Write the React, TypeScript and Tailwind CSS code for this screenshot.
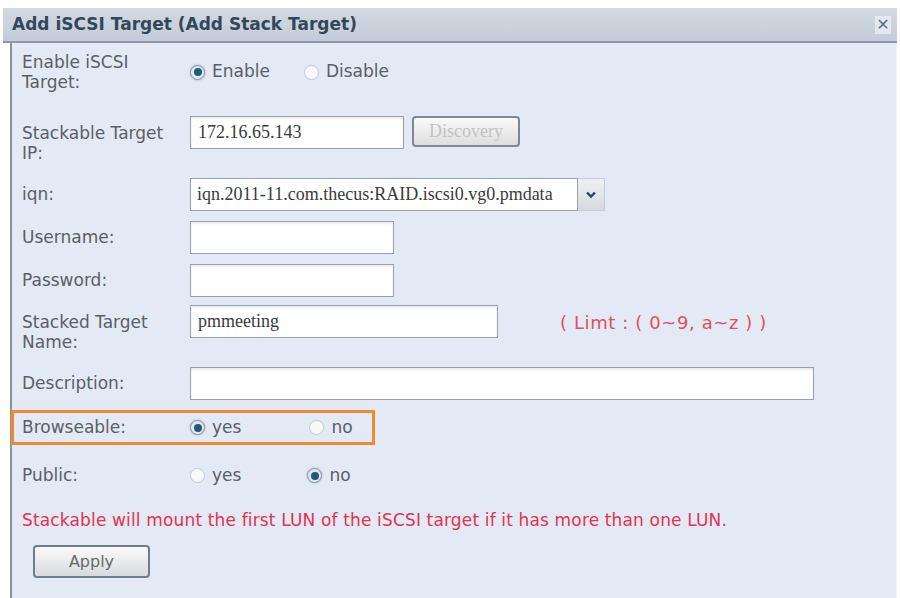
import React, { useState } from 'react';

const sans = { fontFamily: '"DejaVu Sans", Verdana, sans-serif' };
const serif = { fontFamily: '"Liberation Serif", "Times New Roman", serif' };

function Radio({ checked, label, onClick }: { checked: boolean; label: string; onClick: () => void }) {
  return (
    <button type="button" onClick={onClick} className="flex items-center gap-[7px] text-[17px] text-[#5a5f66]">
      <span
        className={`flex h-[15px] w-[15px] items-center justify-center rounded-full border ${
          checked
            ? 'border-[#8a97a6] bg-[#dfe7ef] shadow-[0_0_2px_rgba(60,110,140,0.5)]'
            : 'border-[#c2c8d0] bg-[#f8f9fb]'
        }`}
      >
        {checked && <span className="h-[8px] w-[8px] rounded-full bg-[#235a74]" />}
      </span>
      <span>{label}</span>
    </button>
  );
}

function TextInput({ value, width, onChange }: { value: string; width: string; onChange: (v: string) => void }) {
  return (
    <input
      type="text"
      value={value}
      onChange={(e) => onChange(e.target.value)}
      style={serif}
      className={`${width} h-[33px] border border-[#97a1ae] bg-white px-[7px] text-[18px] text-[#3a3a3a] shadow-[inset_0_2px_2px_rgba(0,0,0,0.08)] outline-none`}
    />
  );
}

export default function App() {
  const [enabled, setEnabled] = useState(true);
  const [ip, setIp] = useState('172.16.65.143');
  const [username, setUsername] = useState('');
  const [password, setPassword] = useState('');
  const [targetName, setTargetName] = useState('pmmeeting');
  const [description, setDescription] = useState('');
  const [browseable, setBrowseable] = useState(true);
  const [isPublic, setIsPublic] = useState(false);

  return (
    <div className="h-[598px] w-[900px] overflow-hidden bg-white pt-[8px]" style={sans}>
      {/* Title bar */}
      <div className="mx-[3px] flex h-[35px] items-center justify-between border-b-2 border-[#8d99a8] bg-gradient-to-b from-[#d3d9e1] to-[#c3ccd9] pl-[9px] pr-[6px]">
        <h1 className="text-[17px] font-bold text-[#33475a]">Add iSCSI Target (Add Stack Target)</h1>
        <span className="flex h-[18px] w-[16px] items-center justify-center bg-[#e4e9f1] text-[16px] font-bold leading-none text-[#5b6d86]">
          ✕
        </span>
      </div>

      {/* Body */}
      <div className="ml-[10px] mr-[3px] h-[560px] border-l-2 border-r border-l-[#8793a4] border-r-[#eef1f7] bg-[#e3e9f5] pl-[10px] text-[17px] text-[#5a5f66]">
        {/* Enable */}
        <div className="flex items-center pt-[9px]">
          <div className="w-[168px] leading-[20px]">
            Enable iSCSI
            <br />
            Target:
          </div>
          <div className="flex gap-[34px]">
            <Radio checked={enabled} label="Enable" onClick={() => setEnabled(true)} />
            <Radio checked={!enabled} label="Disable" onClick={() => setEnabled(false)} />
          </div>
        </div>

        {/* Stackable Target IP */}
        <div className="mt-[24px] flex items-start">
          <div className="w-[168px] pt-[7px] leading-[20px]">
            Stackable Target
            <br />
            IP:
          </div>
          <TextInput value={ip} width="w-[214px]" onChange={setIp} />
          <button
            type="button"
            disabled
            style={serif}
            className="ml-[8px] h-[31px] w-[108px] rounded-[4px] border-2 border-[#7d8897] bg-gradient-to-b from-[#fafafa] to-[#dedede] text-[18px] text-[#c2c2c2]"
          >
            Discovery
          </button>
        </div>

        {/* iqn */}
        <div className="mt-[15px] flex items-center">
          <div className="w-[168px]">iqn:</div>
          <div className="flex h-[33px]">
            <div
              style={serif}
              className="flex w-[388px] items-center overflow-hidden whitespace-nowrap border border-[#97a1ae] bg-white px-[6px] text-[18px] text-[#3a3a3a]"
            >
              iqn.2011-11.com.thecus:RAID.iscsi0.vg0.pmdata
            </div>
            <div className="flex w-[27px] items-center justify-center border border-l-0 border-[#c6ccd6] bg-gradient-to-b from-[#eef0f3] to-[#d6dae0]">
              <svg width="12" height="8" viewBox="0 0 12 8">
                <path d="M2 1.5 L6 5.5 L10 1.5" fill="none" stroke="#2c3f7a" strokeWidth="2.4" />
              </svg>
            </div>
          </div>
        </div>

        {/* Username */}
        <div className="mt-[10px] flex items-center">
          <div className="w-[168px]">Username:</div>
          <TextInput value={username} width="w-[204px]" onChange={setUsername} />
        </div>

        {/* Password */}
        <div className="mt-[10px] flex items-center">
          <div className="w-[168px]">Password:</div>
          <TextInput value={password} width="w-[204px]" onChange={setPassword} />
        </div>

        {/* Stacked Target Name */}
        <div className="mt-[8px] flex items-start">
          <div className="w-[168px] pt-[7px] leading-[20px]">
            Stacked Target
            <br />
            Name:
          </div>
          <TextInput value={targetName} width="w-[308px]" onChange={setTargetName} />
          <span className="ml-[62px] pt-[4px] text-[18px] tracking-[0.6px] text-[#e0505c]">
            ( Limt : ( 0~9, a~z ) )
          </span>
        </div>

        {/* Description */}
        <div className="mt-[15px] flex items-center">
          <div className="w-[168px]">Description:</div>
          <TextInput value={description} width="w-[624px]" onChange={setDescription} />
        </div>

        {/* Browseable */}
        <div className="-ml-[11px] mt-[10px] flex h-[35px] w-[364px] items-center border-[3px] border-[#f08a2c] pl-[8px]">
          <div className="w-[168px]">Browseable:</div>
          <div className="flex gap-[68px]">
            <Radio checked={browseable} label="yes" onClick={() => setBrowseable(true)} />
            <Radio checked={!browseable} label="no" onClick={() => setBrowseable(false)} />
          </div>
        </div>

        {/* Public */}
        <div className="mt-[18px] flex items-center">
          <div className="w-[168px]">Public:</div>
          <div className="flex gap-[66px]">
            <Radio checked={isPublic} label="yes" onClick={() => setIsPublic(true)} />
            <Radio checked={!isPublic} label="no" onClick={() => setIsPublic(false)} />
          </div>
        </div>

        <p className="mt-[19px] text-[17px] tracking-[0.15px] text-[#e2334c]">
          Stackable will mount the first LUN of the iSCSI target if it has more than one LUN.
        </p>

        <button
          type="button"
          className="ml-[11px] mt-[12px] h-[33px] w-[117px] rounded-[4px] border-2 border-[#6f7d90] bg-gradient-to-b from-[#fbfbfb] to-[#d9dadc] text-[16px] text-[#6a6a6a]"
        >
          Apply
        </button>
      </div>
    </div>
  );
}
